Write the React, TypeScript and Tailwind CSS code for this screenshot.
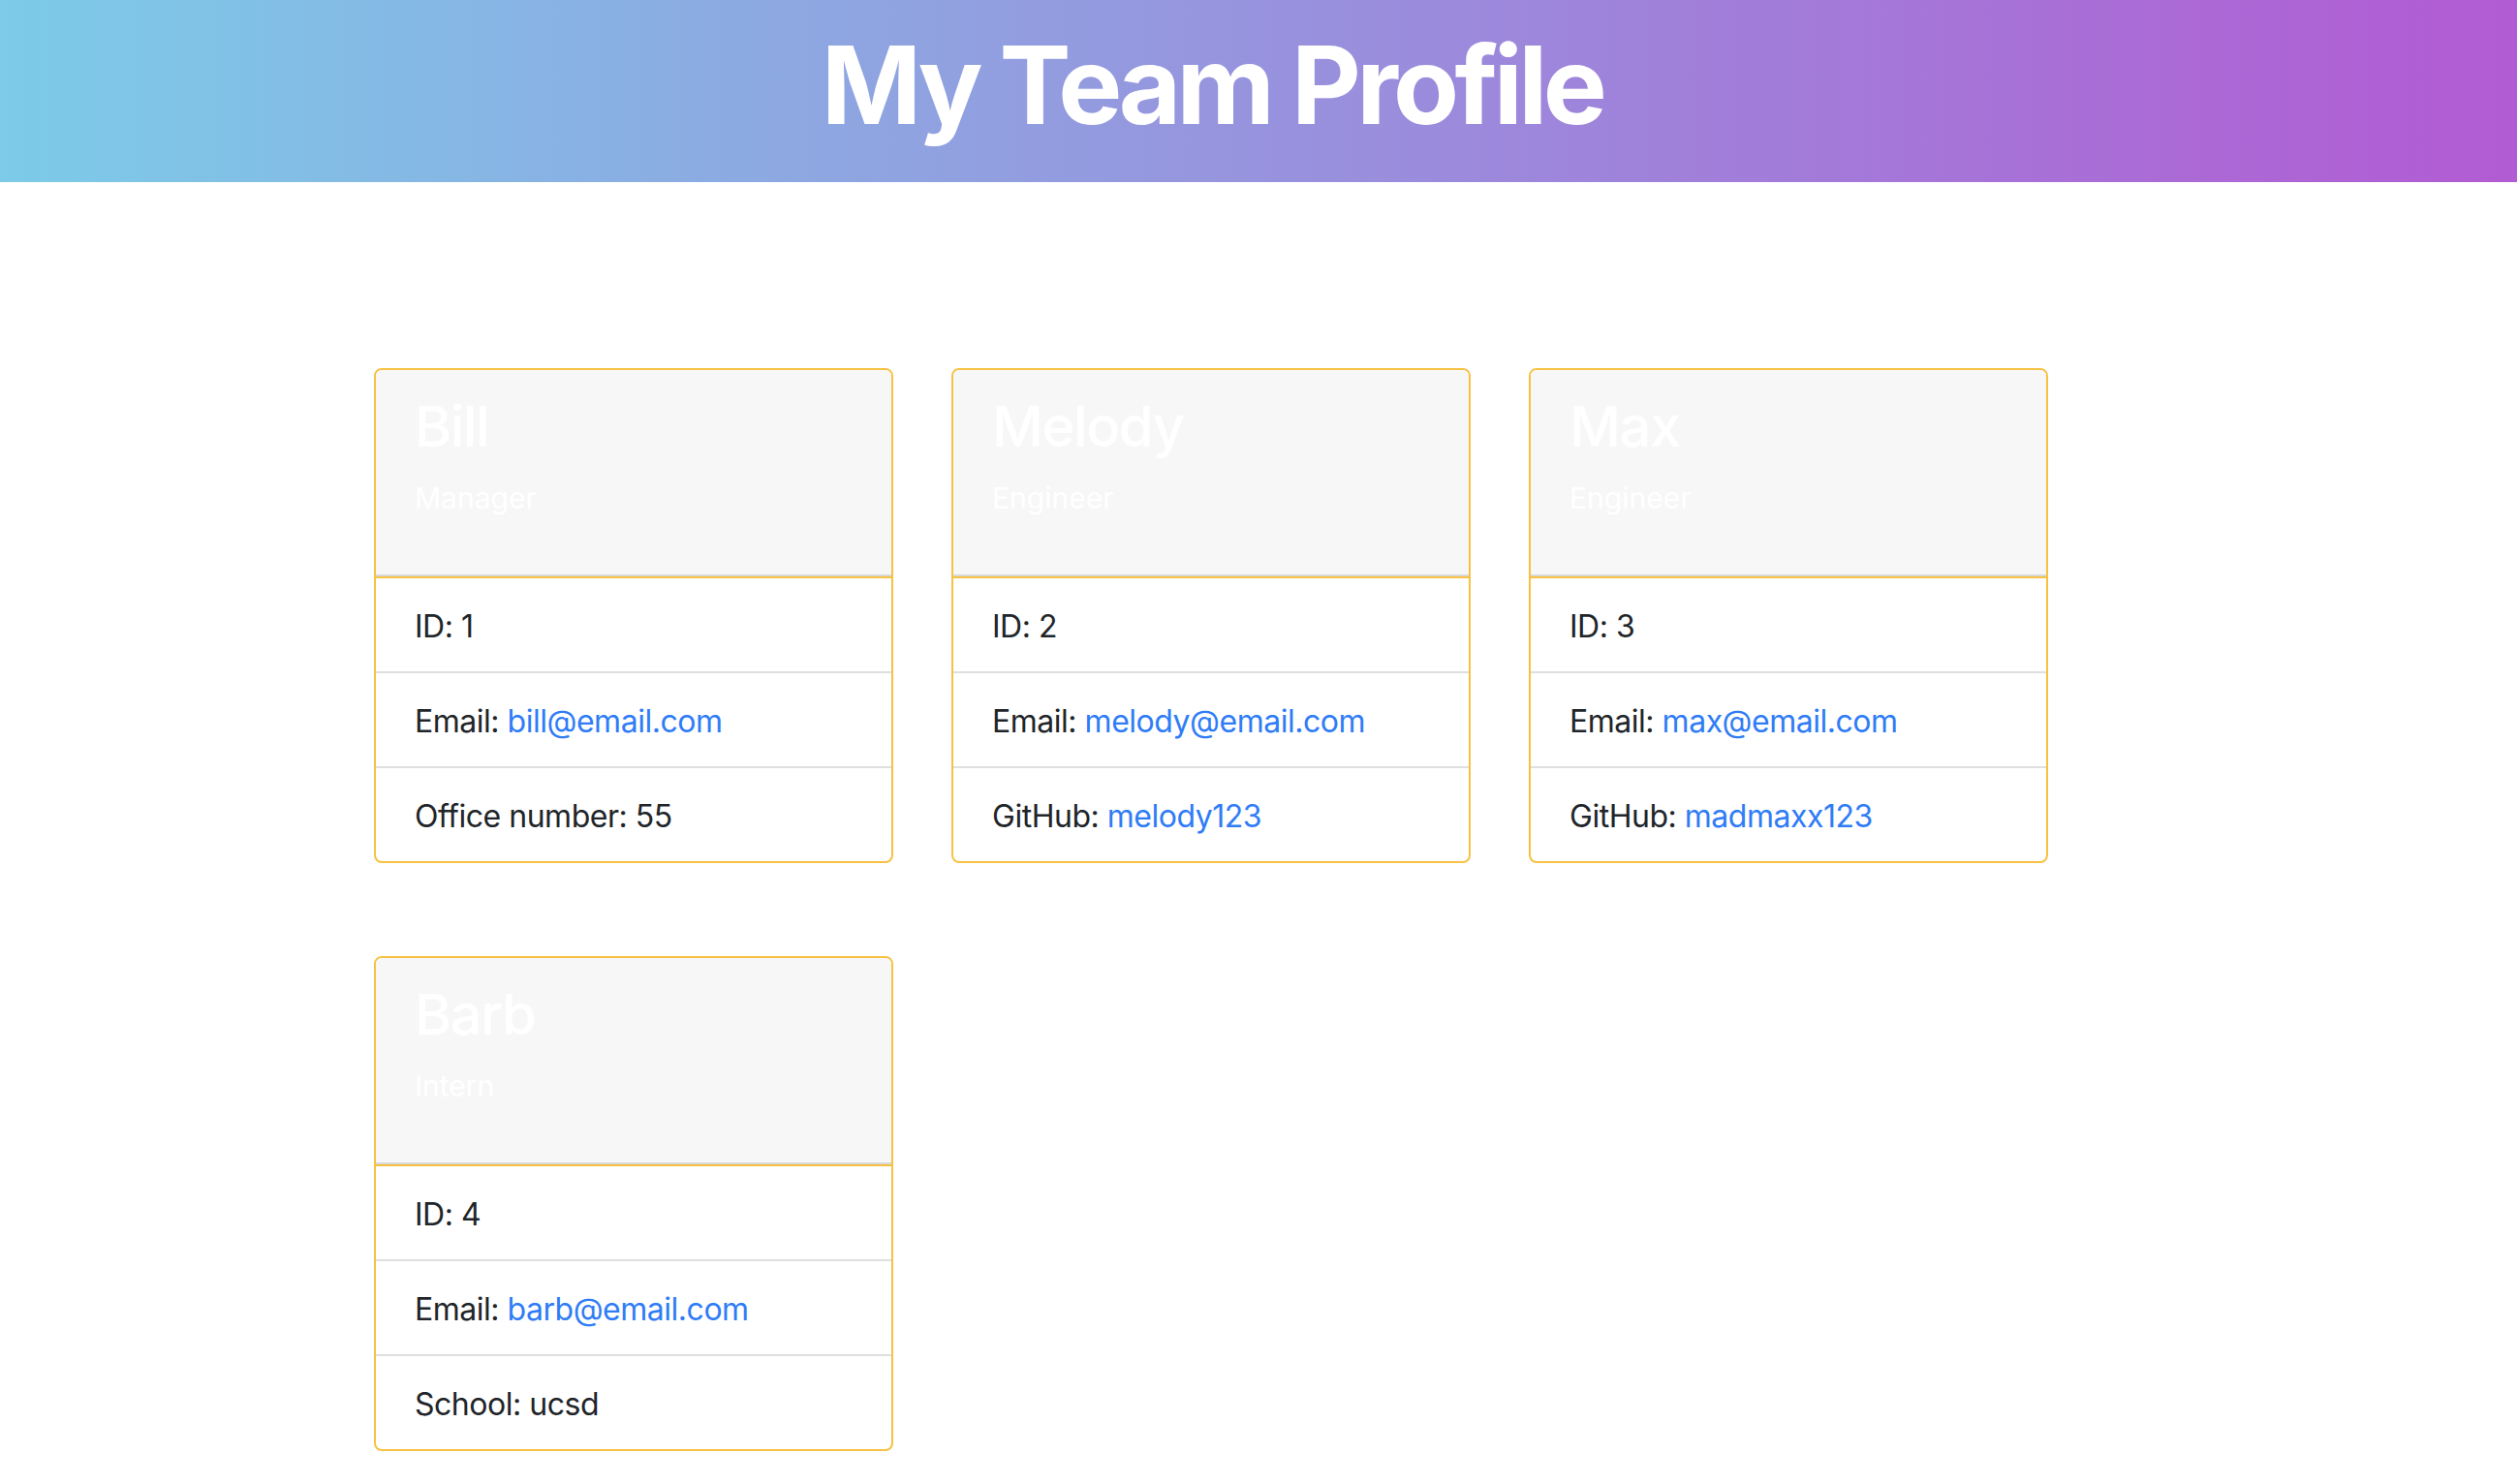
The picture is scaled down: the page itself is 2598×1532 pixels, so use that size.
import { Fragment } from 'react';

type Member = {
  name: string;
  role: string;
  id: number;
  email: string;
  extraLabel: string;
  extraValue: string;
  extraLink?: boolean;
};

const team: Member[] = [
  { name: 'Bill', role: 'Manager', id: 1, email: 'bill@email.com', extraLabel: 'Office number', extraValue: '55' },
  { name: 'Melody', role: 'Engineer', id: 2, email: 'melody@email.com', extraLabel: 'GitHub', extraValue: 'melody123', extraLink: true },
  { name: 'Max', role: 'Engineer', id: 3, email: 'max@email.com', extraLabel: 'GitHub', extraValue: 'madmaxx123', extraLink: true },
  { name: 'Barb', role: 'Intern', id: 4, email: 'barb@email.com', extraLabel: 'School', extraValue: 'ucsd' },
];

function Card({ m }: { m: Member }) {
  return (
    <div className="w-[536px] rounded-[8px] border-2 border-[#f7c144] bg-white overflow-hidden">
      <div className="h-[213px] bg-[#f7f7f7] border-b-2 border-[#d9d9d9] px-[40px] pt-[23px] text-white">
        <h2 className="text-[58px] leading-[70px] font-medium tracking-[-0.025em]">{m.name}</h2>
        <h5 className="mt-[21px] text-[30px] leading-[36px] font-normal">{m.role}</h5>
      </div>
      <ul className="border-t-2 border-[#f7c144] text-[32px] leading-[48px] tracking-[-0.015em] text-[#212529]">
        <li className="px-[40px] pt-[26px] pb-[22px] border-b-2 border-[#dfdfdf]">ID: {m.id}</li>
        <li className="px-[40px] pt-[26px] pb-[22px] border-b-2 border-[#dfdfdf]">
          Email: <a href={`mailto:${m.email}`} className="text-[#2f7cf6]">{m.email}</a>
        </li>
        <li className="px-[40px] pt-[26px] pb-[22px]">
          {m.extraLabel}:{' '}
          {m.extraLink ? (
            <a href="#" className="text-[#2f7cf6]">{m.extraValue}</a>
          ) : (
            <Fragment>{m.extraValue}</Fragment>
          )}
        </li>
      </ul>
    </div>
  );
}

export default function App() {
  return (
    <div className="min-h-screen bg-white font-['Inter','Liberation_Sans',sans-serif]">
      <header className="h-[188px] bg-[linear-gradient(to_right,#7ccbe8,#b25bd3)] flex items-center justify-center pr-[96px]">
        <h1 className="text-[111px] leading-none font-bold tracking-[-0.042em] text-white pb-[14px]">My Team Profile</h1>
      </header>
      <main className="pl-[386px] pt-[192px] pb-[40px]">
        <div className="w-[1728px] flex flex-wrap gap-x-[60px] gap-y-[96px]">
          {team.map(m => (
            <Card key={m.id} m={m} />
          ))}
        </div>
      </main>
    </div>
  );
}
